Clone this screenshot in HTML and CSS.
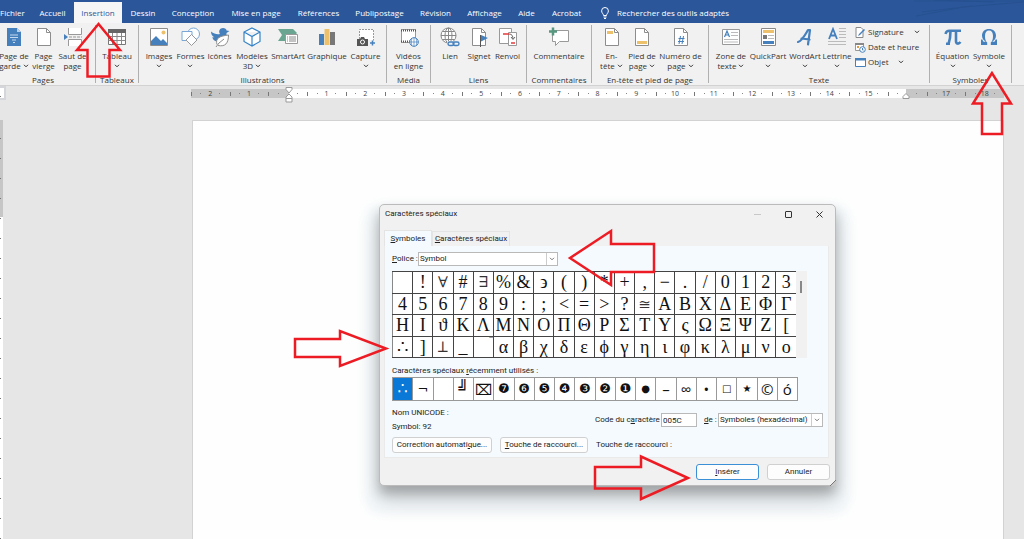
FILE: index.html
```html
<!DOCTYPE html>
<html lang="fr">
<head>
<meta charset="utf-8">
<title>Caractères spéciaux</title>
<link rel="stylesheet" href="styles.css">
</head>
<body>
<svg class="defs" width="0" height="0" aria-hidden="true">
  <symbol id="chev" viewBox="0 0 6 4"><path d="M1 .8 3 2.8 5 .8" fill="none" stroke="currentColor" stroke-width="1"/></symbol>
  <symbol id="sheet" viewBox="0 0 20 20"><path d="M3.500 1.500h9l4 4v13h-13z" fill="#fff" stroke="#8d8d8d"/><path d="M12.500 1.500v4h4" fill="none" stroke="#8d8d8d"/></symbol>
</svg>

<header class="tabs-bar">
  <nav class="tabs">
    <button class="tab">Fichier</button>
    <button class="tab">Accueil</button>
    <button class="tab active">Insertion</button>
    <button class="tab">Dessin</button>
    <button class="tab">Conception</button>
    <button class="tab">Mise en page</button>
    <button class="tab">Références</button>
    <button class="tab">Publipostage</button>
    <button class="tab">Révision</button>
    <button class="tab">Affichage</button>
    <button class="tab">Aide</button>
    <button class="tab">Acrobat</button>
  </nav>
  <button class="search">
    <svg width="8" height="12" viewBox="0 0 8 12" fill="none" stroke="#fff"><path d="M2.500 8.500C2.500 6.800.6 6 .6 3.900a3.400 3.400 0 0 1 6.800 0C7.400 6 5.500 6.800 5.500 8.500zM2.500 10h3M3 11.500h2"/></svg>
    <span>Rechercher des outils adaptés</span>
  </button>
  <svg class="waves" width="110" height="18" viewBox="0 0 110 18" fill="none" stroke="#234a86"><path d="M0 1h110M2 16 50 7l60-5M8 12l50-6M20 0l60 2"/></svg>
</header>

<div class="ribbon">
  <section class="group pages">
    <div class="items">
      <button class="item"><svg viewBox="0 0 20 20"><path d="M3 1h10l4 4v14H3z" fill="#4580bd"/><path d="M13 1v4h4" fill="#bcd2ea"/><path d="M6 8h8M6 10.500h8M8 13h4M9 15.500h2" stroke="#c4d9ee"/></svg><span>Page de<br>garde <svg class="chev"><use href="#chev"/></svg></span></button>
      <button class="item"><svg viewBox="0 0 20 20"><use href="#sheet"/></svg><span>Page<br>vierge</span></button>
      <button class="item"><svg viewBox="0 0 20 20"><path d="M5.500 1v6.500h13V1M5.500 19v-6.500h13V19" fill="#fff" stroke="#999"/><path d="M6 10h13" stroke="#999" stroke-dasharray="3 1"/><path d="M1 7l4 3-4 3z" fill="#4580bd"/></svg><span>Saut de<br>page</span></button>
    </div>
    <h2>Pages</h2>
  </section>
  <section class="group tableaux">
    <div class="items">
      <button class="item"><svg viewBox="0 0 20 20"><path d="M1.500 2.500h17v15h-17z" fill="#fff" stroke="#777"/><path d="M1 2h18v4H1z" fill="#666"/><path d="M1.500 9.500h17M1.500 13.500h17M5.500 6v11M10 6v11M14.500 6v11" stroke="#888"/></svg><span>Tableau<br><svg class="chev"><use href="#chev"/></svg></span></button>
    </div>
    <h2>Tableaux</h2>
  </section>
  <section class="group illustrations">
    <div class="items">
      <button class="item"><svg viewBox="0 0 20 20"><path d="M1.500 1.500h17v17h-17z" fill="#fff" stroke="#8d8d8d"/><path d="M2 18v-4l5-5 5 5 2-2 4 4v2z" fill="#4580bd"/><circle cx="14.500" cy="5.500" r="2" fill="#edc06b"/></svg><span>Images<br><svg class="chev"><use href="#chev"/></svg></span></button>
      <button class="item"><svg viewBox="0 0 20 20" fill="#fdfeff" stroke="#7ba7d6"><circle cx="12.500" cy="7" r="6"/><path d="M1 4.500h10v9H1z"/><path d="M10.500 7.500 16 13l-5.500 5.500L5 13z" stroke="#999"/></svg><span>Formes<br><svg class="chev"><use href="#chev"/></svg></span></button>
      <button class="item"><svg viewBox="0 0 20 20"><path d="M1 4.500c3 2.500 6 3 9 2.500-2-3 0-6 3-6 2 0 3.500 1 3.500 2.500l3 .5-3 2c.5 5-3 8.500-8 8.500-4 0-6-2-6-4.500l2 .5C2 9 1 7 1 4.500z" fill="#4580bd"/><path d="M7 17.500C5 11 10 9 18.500 8c0 8-3 12-10.500 10.500M6 20l3-4 5-4" fill="#fff" stroke="#8d8d8d"/></svg><span>Icônes</span></button>
      <button class="item"><svg viewBox="0 0 20 20" fill="#fff" stroke="#3483c6" stroke-width="1.200"><path d="M10 1 18 5v9.500L10 19 2 14.500V5zM2 5l8 4.500L18 5M10 9.500V19"/></svg><span>Modèles<br>3D <svg class="chev"><use href="#chev"/></svg></span></button>
      <button class="item"><svg viewBox="0 0 20 20"><path d="M0 2h15l4 4-2 2H8v6H0l4-6z" fill="#6aa592"/><path d="M7.500 7.500h12v9h-12z" fill="#fff" stroke="#999"/><path d="M9 10h1m1 0h7M9 12h1m1 0h7M9 14h1m1 0h7" stroke="#888"/></svg><span>SmartArt</span></button>
      <button class="item"><svg viewBox="0 0 20 20"><path d="M2 7h5v11H2z" fill="#4580bd"/><path d="M7.500 2h5v16h-5z" fill="#edc06b"/><path d="M13 5h5v13h-5z" fill="#777"/></svg><span>Graphique</span></button>
      <button class="item"><svg viewBox="0 0 20 20"><path d="M3.500 12V2.500h14v11" fill="#fff" stroke="#999" stroke-dasharray="2 1"/><path d="M1 12h3l1-2h3l1 2h3v7H1z" fill="#555"/><circle cx="6.500" cy="15" r="2" fill="#555" stroke="#fff"/><path d="M14 16h5M16.500 13.500v5" stroke="#4580bd" stroke-width="1.500"/></svg><span>Capture<br><svg class="chev"><use href="#chev"/></svg></span></button>
    </div>
    <h2>Illustrations</h2>
  </section>
  <section class="group media">
    <div class="items">
      <button class="item"><svg viewBox="0 0 20 20"><path d="M2.500 2.500h14v13h-14z" fill="#fff" stroke="#999"/><path d="M2 3.500h15M2 14.500h12" stroke="#555" stroke-width="2" stroke-dasharray="1 1"/><circle cx="15" cy="15" r="4.300" fill="#fff" stroke="#4580bd"/><path d="M10.500 15h9M15 10.500v9M13 11.500c-1 2-1 5 0 7M17 11.500c1 2 1 5 0 7" fill="none" stroke="#4580bd" stroke-width=".7"/></svg><span>Vidéos<br>en ligne</span></button>
    </div>
    <h2>Média</h2>
  </section>
  <section class="group liens">
    <div class="items">
      <button class="item"><svg viewBox="0 0 20 20" fill="none" stroke="#888"><circle cx="8.500" cy="8.500" r="7.500" fill="#fff"/><ellipse cx="8.500" cy="8.500" rx="3.500" ry="7.500"/><path d="M1 8.500h15M2.500 4.500h12M2.500 12.500h12M8.500 1v15"/><path d="M7 14h13v6H7z" fill="#f1f1f1" stroke="none"/><rect x="8" y="15" width="6" height="3.500" rx="1.700" stroke="#4580bd" stroke-width="1.400"/><rect x="13" y="15" width="6" height="3.500" rx="1.700" stroke="#4580bd" stroke-width="1.400"/></svg><span>Lien</span></button>
      <button class="item"><svg viewBox="0 0 20 20"><use href="#sheet"/><path d="M11.500 8v12" stroke="#555"/><path d="M12 8l7 3-7 3.500z" fill="#4580bd"/></svg><span>Signet</span></button>
      <button class="item"><svg viewBox="0 0 20 20"><path d="M1.500 1.500h12v15h-12z" fill="#fff" stroke="#999"/><path d="M10.500 5.500h8v13h-8z" fill="#fff" stroke="#999"/><path d="M5 7h6M13 16h4" stroke="#e23b3b" stroke-width="1.500"/><path d="M11 7c3 0 4 2 4 5m-2-2 2 2.500 2-2.500" fill="none" stroke="#666"/></svg><span>Renvoi</span></button>
    </div>
    <h2>Liens</h2>
  </section>
  <section class="group comm">
    <div class="items">
      <button class="item"><svg viewBox="0 0 20 20"><path d="M3.500 3.500h16v11h-9l-4 4v-4h-3z" fill="#fff" stroke="#999"/><path d="M0 4.500h8M4 .5v8" stroke="#57967f" stroke-width="2.500"/></svg><span>Commentaire</span></button>
    </div>
    <h2>Commentaires</h2>
  </section>
  <section class="group entete">
    <div class="items">
      <button class="item"><svg viewBox="0 0 20 20"><use href="#sheet"/><path d="M5 4h6v3H5z" fill="#edc06b"/></svg><span>En-<br>tête <svg class="chev"><use href="#chev"/></svg></span></button>
      <button class="item"><svg viewBox="0 0 20 20"><use href="#sheet"/><path d="M5 14h10v3H5z" fill="#edc06b"/></svg><span>Pied de<br>page <svg class="chev"><use href="#chev"/></svg></span></button>
      <button class="item"><svg viewBox="0 0 20 20"><use href="#sheet"/><path d="M9.500 9 8 17M12.500 9 11 17M7.500 11.500h6M7 14.500h6" stroke="#4580bd"/></svg><span>Numéro de<br>page <svg class="chev"><use href="#chev"/></svg></span></button>
    </div>
    <h2>En-tête et pied de page</h2>
  </section>
  <section class="group texte">
    <div class="items">
      <button class="item"><svg viewBox="0 0 20 20"><path d="M1.500 2.500h17v15h-17z" fill="#fff" stroke="#999"/><path d="M3.500 10 6 4l2.500 6M4.500 8h3" fill="none" stroke="#4580bd" stroke-width="1.200"/><path d="M10 5.500h7M10 8.500h7M3 12.500h14M3 15h14" stroke="#bbb"/></svg><span>Zone de<br>texte <svg class="chev"><use href="#chev"/></svg></span></button>
      <button class="item"><svg viewBox="0 0 20 20"><path d="M3.500 1.500h14v17h-14z" fill="#fff" stroke="#888"/><path d="M5 3h11v3H5z" fill="#edc06b"/><path d="M5 8h4v4H5z" fill="#777"/><path d="M10 8.500h6M10 11.500h6" stroke="#bbb"/><path d="M5 14h11v3H5z" fill="#4580bd"/></svg><span>QuickPart<br><svg class="chev"><use href="#chev"/></svg></span></button>
      <button class="item"><svg viewBox="0 0 20 20"><path d="M3 15c4-1 7-7 10-12h2l-2 14.500M6.500 11.500l8 1" fill="none" stroke="#4580bd" stroke-width="2.200" stroke-linejoin="round" stroke-linecap="round"/></svg><span>WordArt<br><svg class="chev"><use href="#chev"/></svg></span></button>
      <button class="item"><svg viewBox="0 0 20 20"><path d="M2 12 6 2l4 10M3.500 8.500h5" fill="none" stroke="#4580bd" stroke-width="1.800"/><path d="M12 1.500h7M12 4.500h7M12 7.500h7M12 10.500h7M1 14.500h18M1 17.500h18" stroke="#bbb"/></svg><span>Lettrine<br><svg class="chev"><use href="#chev"/></svg></span></button>
      <div class="mini">
        <button><svg viewBox="0 0 11 11"><path d="M1 .5h5l2 2v8H1z" fill="#fff" stroke="#888"/><path d="M3 9l1-2 5-5 1 1-5 5z" fill="#4580bd"/></svg>Signature<svg class="chev"><use href="#chev"/></svg></button>
        <button><svg viewBox="0 0 11 11"><path d="M.5 1.500h8v7h-8z" fill="#fff" stroke="#999"/><path d="M0 1h9v2H0z" fill="#888"/><path d="M2 4h2v2H2z" fill="#e29a3f"/><circle cx="7.500" cy="7.500" r="2.800" fill="#fff" stroke="#4580bd"/><path d="M7.500 6v2h1" fill="none" stroke="#4580bd"/></svg>Date et heure</button>
        <button><svg viewBox="0 0 11 11"><path d="M.5 1.500h10v8H.5z" fill="#fff" stroke="#4580bd"/><path d="M0 1h11v2.500H0z" fill="#4580bd"/></svg>Objet<svg class="chev"><use href="#chev"/></svg></button>
      </div>
    </div>
    <h2>Texte</h2>
  </section>
  <section class="group symb">
    <div class="items">
      <button class="item"><svg viewBox="0 0 20 20" fill="none" stroke="#4580bd"><path d="M2.500 7c.5-2.500 1.500-3.200 4-3.200h11.500" stroke-width="2.400"/><path d="M7.500 4c0 6-.5 9-2 13M3 16.800h4M13 4v10c0 3 2.500 3.500 4.500 1" stroke-width="2.600"/></svg><span>Équation<br><svg class="chev"><use href="#chev"/></svg></span></button>
      <button class="item"><svg viewBox="0 0 20 20"><path d="M2 12.500h1.500c.3 1.800.8 2.300 2 2.300h1.300C4.500 13.500 3 11.600 3 8.600 3 4.600 5.800 2 10 2s7 2.600 7 6.600c0 3-1.500 4.900-3.800 6.200h1.300c1.200 0 1.700-.5 2-2.300H18V18h-6.200v-2.400c1.500-1.400 2.200-3.400 2.200-6.600C14 5.500 12.600 3.500 10 3.500S6 5.500 6 9c0 3.200.7 5.200 2.200 6.600V18H2z" fill="#4580bd"/></svg><span>Symbole<br><svg class="chev"><use href="#chev"/></svg></span></button>
    </div>
    <h2>Symboles</h2>
  </section>
</div>

<main class="workspace">
  <div class="ruler-row">
    <div class="tab-stop"></div>
    <div class="ruler">
      <span>2</span><span>1</span><span></span><span>1</span><span>2</span><span>3</span><span>4</span><span>5</span><span>6</span><span>7</span><span>8</span><span>9</span><span>10</span><span>11</span><span>12</span><span>13</span><span>14</span><span>15</span><span></span><span>17</span><span>18</span>
      <svg class="marker first" width="8" height="16" viewBox="0 0 8 16" fill="#fff" stroke="#999"><path d="M1 .5h6v2L4 6 1 2.500zM4 7l3 3v5H1v-5zM1 11.500h6"/></svg>
      <svg class="marker last" width="8" height="6" viewBox="0 0 8 6" fill="#fff" stroke="#999"><path d="M4 .5 7 3.500v2H1v-2z"/></svg>
    </div>
  </div>
  <div class="canvas">
    <div class="v-ruler"></div>
    <div class="sheet"></div>
  </div>
</main>

<div class="dialog" role="dialog" aria-labelledby="dlg-title">
  <div class="title-bar">
    <h1 id="dlg-title">Caractères spéciaux</h1>
    <div class="win">
      <button aria-label="Réduire"><svg viewBox="0 0 9 9"><path d="M1 4.500h7" stroke="#c8c8c8"/></svg></button>
      <button aria-label="Agrandir"><svg viewBox="0 0 9 9"><rect x="1.500" y="1.500" width="6" height="6" rx=".5" fill="none" stroke="#333"/></svg></button>
      <button aria-label="Fermer"><svg viewBox="0 0 9 9"><path d="M1.500 1.500l6 6M7.500 1.500l-6 6" stroke="#333"/></svg></button>
    </div>
  </div>
  <div class="dlg-tabs">
    <button class="on"><u>S</u>ymboles</button><button><u>C</u>aractères spéciaux</button>
  </div>
  <div class="panel">
    <div class="font-row">
      <label for="police"><u>P</u>olice :</label>
      <span class="combo"><select id="police"><option>Symbol</option></select><svg class="drop"><use href="#chev"/></svg></span>
    </div>
    <div class="picker">
      <table class="chars">
        <tr><td></td><td>!</td><td class="math">∀</td><td>#</td><td class="math">∃</td><td>%</td><td>&amp;</td><td>϶</td><td>(</td><td>)</td><td>*</td><td>+</td><td>,</td><td>−</td><td>.</td><td>/</td><td>0</td><td>1</td><td>2</td><td>3</td></tr>
        <tr><td>4</td><td>5</td><td>6</td><td>7</td><td>8</td><td>9</td><td>:</td><td>;</td><td>&lt;</td><td>=</td><td>&gt;</td><td>?</td><td class="math">≅</td><td>Α</td><td>Β</td><td>Χ</td><td>Δ</td><td>Ε</td><td>Φ</td><td>Γ</td></tr>
        <tr><td>Η</td><td>Ι</td><td>ϑ</td><td>Κ</td><td>Λ</td><td>Μ</td><td>Ν</td><td>Ο</td><td>Π</td><td>Θ</td><td>Ρ</td><td>Σ</td><td>Τ</td><td>Υ</td><td>ς</td><td>Ω</td><td>Ξ</td><td>Ψ</td><td>Ζ</td><td>[</td></tr>
        <tr><td>∴</td><td>]</td><td class="math">⊥</td><td>_</td><td class="over">‾</td><td>α</td><td>β</td><td>χ</td><td>δ</td><td>ε</td><td>ϕ</td><td>γ</td><td>η</td><td>ι</td><td>φ</td><td>κ</td><td>λ</td><td>μ</td><td>ν</td><td>ο</td></tr>
      </table>
      <div class="scroll"><i></i></div>
    </div>
    <p class="recent-label">Caractères spéciaux <u>r</u>écemment utilisés :</p>
    <table class="recent">
      <tr><td class="sel">∴</td><td>¬</td><td></td><td class="box">╝</td><td class="wide">⌧</td><td>❼</td><td>❻</td><td>❺</td><td>❹</td><td>❸</td><td>❷</td><td>❶</td><td class="small">●</td><td class="wide">–</td><td class="wide">∞</td><td class="wide">•</td><td class="small">□</td><td class="small">★</td><td class="wide">©</td><td class="wide">ó</td></tr>
    </table>
    <div class="info">
      <div class="name"><p>Nom UNICODE :</p><p>Symbol: 92</p></div>
      <label for="code">Code du c<u>a</u>ractère :</label>
      <input id="code" value="005C">
      <label for="de"><u>d</u>e :</label>
      <span class="combo"><select id="de"><option>Symboles (hexadécimal)</option></select><svg class="drop"><use href="#chev"/></svg></span>
    </div>
    <div class="actions">
      <button class="btn auto">Correction automati<u>q</u>ue...</button>
      <button class="btn key"><u>T</u>ouche de raccourci...</button>
      <span>Touche de raccourci :</span>
    </div>
  </div>
  <div class="footer">
    <button class="btn primary"><u>I</u>nsérer</button>
    <button class="btn">Annuler</button>
  </div>
  <svg class="grip" width="6" height="6" viewBox="0 0 6 6"><path d="M6 0v6H0z" fill="#c8c8c8"/><path d="M6 0 0 6" stroke="#777"/></svg>
</div>

<svg class="arrows" width="1024" height="539" viewBox="0 0 1024 539" fill="none" stroke="#ed1c24" stroke-width="2.500" aria-hidden="true">
  <path d="M98.500 24 77 50h10.500v26.500h22V50H120z"/>
  <path d="M992 73l-19 30.500h9V134h20v-30.500h9z"/>
  <path d="M570 258l41-27v13h43v28h-43v13z"/>
  <path d="M295 339h45v-8l46 17.500L340 366v-9h-45z"/>
  <path d="M595 467h46v-10.500l47 21.500-47 21v-10.500h-46z"/>
</svg>
</body>
</html>
```

FILE: styles.css
```css
* { box-sizing: border-box; }
body { margin: 0; min-height: 100vh; display: flex; flex-direction: column; overflow: hidden; position: relative; background: #e6e6e6; color: #333; font: 8px/10px "Open Sans", "Noto Sans", sans-serif; }
button { font: inherit; color: inherit; border: 0; background: none; padding: 0; margin: 0; white-space: nowrap; }
h1, h2, p { margin: 0; font: inherit; }
.defs { position: absolute; }
.chev { width: 6px; height: 4px; vertical-align: 1px; }

.tabs-bar { display: flex; height: 23px; background: #2b579a; color: #fff; overflow: hidden; }
.tabs { display: grid; grid-template-columns: 31px 43px 48px 42px 58px 68px 57px 65px 47px 51px 33px 47px; padding-top: 2px; }
.tab { display: flex; justify-content: center; align-items: center; }
.tab:first-child { justify-content: flex-start; }
.tab.active { background: #f6f6f6; color: #2b579a; }
.search { display: flex; align-items: center; gap: 8px; padding: 2px 0 0 11px; }
.waves { margin-left: auto; opacity: .5; }

.ribbon { display: flex; height: 63px; padding-top: 2px; background: #f1f1f1; border-bottom: 1px solid #d2d2d2; }
.group { display: flex; flex-direction: column; justify-content: space-between; height: 58px; padding: 0 4px; border-right: 1px solid #b0b0b0; }
.group h2 { text-align: center; line-height: 10px; margin-bottom: -2px; }
.items { display: grid; padding-top: 2px; }
.pages { padding: 0 9px 0 0; }
.pages .items { grid-template-columns: 28px 31px 27px; }
.tableaux .items { grid-template-columns: 34px; }
.illustrations .items { grid-template-columns: 32px 31px 27px 38px 34px 44px 33px; }
.media .items { grid-template-columns: 35px; }
.liens .items { grid-template-columns: 30px 28px 29px; }
.comm .items { grid-template-columns: 56px; }
.entete .items { grid-template-columns: 31px 30px 47px; }
.texte .items { grid-template-columns: 36px 38px 36px 28px 74px; }
.symb .items { grid-template-columns: 37px 36px; }
.item { display: flex; flex-direction: column; align-items: center; gap: 4px; }
.item > svg { width: 20px; height: 20px; flex: none; }
.item > span { margin: 0 -10px; }
.mini { display: flex; flex-direction: column; gap: 5px; padding-left: 4px; }
.mini button { display: flex; align-items: center; gap: 2px; height: 10px; }
.mini svg:first-child { width: 11px; height: 11px; flex: none; }
.mini .chev { margin-left: 8px; }

.workspace { flex: 1; display: flex; flex-direction: column; }
.ruler-row { display: flex; align-items: flex-start; justify-content: space-between; height: 34px; padding-right: 20px; }
.tab-stop { width: 6px; height: 14px; background: linear-gradient(#777, #777) 0 8px / 1px 1px no-repeat #fff; border: 2px solid #d5d5dc; border-left: 0; }
.ruler { position: relative; display: grid; grid-template-columns: repeat(21, 1fr); flex: 1; height: 9px; margin: 3px 0 0 185px; background: linear-gradient(90deg, #c6c6c6 12%, #fff 12% 88%, #c6c6c6 88%); font-size: 7px; line-height: 9px; text-align: center; color: #444; }
.ruler span { background: linear-gradient(#777, #777) 0 50% / 1px 4px no-repeat, linear-gradient(#888, #888) 25% 50% / 1px 1px no-repeat, linear-gradient(#888, #888) 75% 50% / 1px 1px no-repeat; }
.marker { position: absolute; }
.marker.first { left: calc(12% - 4px); top: -2px; }
.marker.last { left: calc(88% - 4px); top: 4px; }
.canvas { flex: 1; display: flex; gap: 189px; padding-right: 20px; }
.v-ruler { width: 3px; background: repeating-linear-gradient(#0000 0 18px, #777 18px 19px, #0000 19px 20px) 0 0 / 1px 100% no-repeat, linear-gradient(#c6c6c6 97px, #fff 97px); }
.sheet { flex: 1; background: #fefefe; border: 1px solid #d2d2d2; border-bottom: 0; }

.dialog { position: absolute; left: 379px; top: 204px; width: 457px; padding: 0 6px 5px 4px; background: #f1f1f1; border: 1px solid #bbb; border-radius: 5px; color: #222; font-family: Roboto, "Open Sans", sans-serif; box-shadow: 0 8px 12px rgba(0, 0, 0, .24), 0 14px 22px 2px rgba(0, 0, 0, .14), 0 14px 10px 14px rgba(232, 243, 249, .45); }
.title-bar { display: flex; justify-content: space-between; align-items: center; height: 18px; padding-left: 1px; }
.win { display: flex; gap: 22px; padding-right: 5px; }
.win svg { display: block; width: 9px; height: 9px; }
.dlg-tabs { display: flex; align-items: flex-end; margin-top: 7px; height: 16px; }
.dlg-tabs button { height: 15px; width: 78px; border: 1px solid #e4e4e4; border-bottom: 0; }
.dlg-tabs .on { height: 16px; width: 48px; background: #f4fafd; }
.panel { padding: 6px 5px 4px 7px; background: #f4fafd; border: 1px solid #eaeaea; border-top: 0; }
.font-row { display: flex; align-items: center; gap: 1px; }
.font-row label { width: 25px; white-space: nowrap; }
.combo { display: grid; width: 140px; height: 14px; }
.combo > * { grid-area: 1 / 1; }
select, input { appearance: none; font: inherit; color: inherit; height: 14px; margin: 0; padding: 0 1px; border: 1px solid #b9b9b9; border-radius: 0; background: #fff; min-width: 0; width: 100%; }
.drop { justify-self: end; width: 11px; height: 12px; margin: 1px; padding: 2px; border-left: 1px solid #ccc; color: #777; pointer-events: none; }
.picker { display: flex; margin-top: 5px; }
table { border-collapse: collapse; table-layout: fixed; background: #fff; color: #111; }
td { padding: 0; text-align: center; overflow: hidden; white-space: nowrap; }
.chars { width: 404px; height: 87px; border-top: 1px solid #444; border-bottom: 1px solid #444; border-left: 1px solid #888; font: 18px/19px "Liberation Serif", "DejaVu Serif", serif; }
.chars td { padding-top: 1px; border-bottom: 1px solid #444; border-right: 1px solid #444; }
.chars td:last-child { border-right: 0; }
.chars .math { font-family: "Liberation Serif", "DejaVu Math TeX Gyre", "DejaVu Sans", serif; font-size: 15px; color: #333; }
.chars .over { font-size: 10px; line-height: 10px; text-align: right; vertical-align: top; }
.scroll { width: 11px; padding: 10px 4px; background: #f1f1f1; }
.scroll i { display: block; width: 2px; height: 12px; background: #888; }
.recent-label { margin-top: 8px; }
.recent { width: 406px; margin-top: 1px; font: 13px/20px "DejaVu Sans", sans-serif; }
.recent td { height: 23px; border: 1px solid #999; }
.recent .sel { background: #0a78d6; color: #fff; }
.recent .sel, .recent .box { font-size: 16px; }
.recent .small { font-size: 10px; }
.recent .wide { font-family: "Open Sans", "DejaVu Sans", sans-serif; font-size: 15px; }
.info { display: flex; align-items: center; margin-top: 4px; height: 30px; white-space: nowrap; }
.name { width: 203px; }
.name p + p { margin-top: 4px; }
.info label { width: 66px; }
.info input { width: 36px; }
.info input + label { width: 14px; margin-left: 7px; }
.info .combo { width: 105px; }
.actions { display: flex; align-items: center; gap: 8px; margin-top: 2px; }
.btn { height: 16px; width: 63px; background: #fdfdfd; border: 1px solid #d0d0d0; border-radius: 3px; }
.btn.auto { width: 100px; }
.btn.key { width: 88px; }
.footer { display: flex; justify-content: flex-end; gap: 8px; margin: 6px -1px 0 0; }
.btn.primary { border-color: #3b8fd6; }
.grip { position: absolute; right: -1px; bottom: -1px; }
.arrows { position: absolute; left: 0; top: 0; pointer-events: none; }
```
